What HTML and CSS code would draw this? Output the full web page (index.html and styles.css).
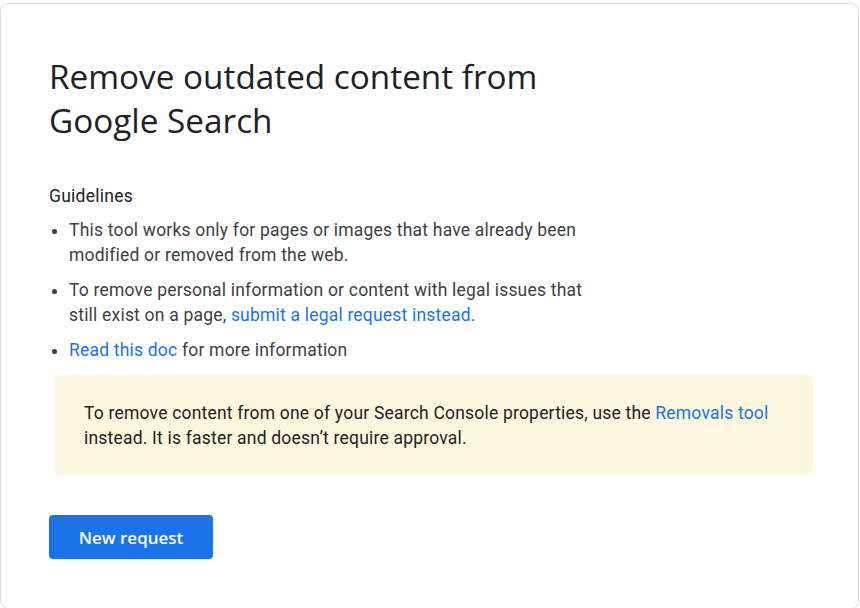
FILE: index.html
```html
<!DOCTYPE html>
<html lang="en">
<head>
<meta charset="utf-8">
<title>Remove outdated content</title>
<link rel="stylesheet" href="styles.css">
</head>
<body>
<main class="card">
  <h1 class="title">Remove outdated content from<br>Google Search</h1>
  <section class="guidelines">
    <h2 class="guidelines-heading">Guidelines</h2>
    <ul class="guidelines-list">
      <li>This tool works only for pages or images that have already been modified or removed from the web.</li>
      <li>To remove personal information or content with legal issues that still exist on a page, <a href="#" class="link">submit a legal request instead.</a></li>
      <li><a href="#" class="link">Read this doc</a> for more information</li>
    </ul>
  </section>
  <div class="notice">
    <p>To remove content from one of your Search Console properties, use the <a href="#" class="link">Removals tool</a> instead. It is faster and doesn’t require approval.</p>
  </div>
  <div class="actions">
    <button class="btn-primary" type="button">New request</button>
  </div>
</main>
</body>
</html>
```

FILE: styles.css
```css
* { box-sizing: border-box; }
html, body { margin: 0; padding: 0; background: #ffffff; }
body {
  font-family: Roboto, "Liberation Sans", sans-serif;
  color: #3c4043;
  overflow: hidden;
}
.card {
  margin-top: 3px;
  width: 859px;
  height: 606px;
  border: 1px solid #dadce0;
  border-radius: 8px;
  padding: 50px 0 0 48px;
}
.title {
  margin: 0;
  font-family: "Open Sans", sans-serif;
  font-weight: 400;
  font-size: 33.3px;
  line-height: 44px;
  color: #202124;
}
.guidelines { margin-top: 42px; width: 545px; }
.guidelines-heading {
  margin: 0;
  font-size: 17.5px;
  font-weight: 400;
  line-height: 24px;
  color: #202124;
  letter-spacing: 0.25px;
}
.guidelines-list {
  margin: 10px 0 12px 0;
  padding-left: 20px;
  font-size: 17.5px;
  line-height: 25px;
  letter-spacing: 0.2px;
}
.guidelines-list li { margin-bottom: 10px; }
.guidelines-list li:last-child { margin-bottom: 0; }
.link { color: #1a73e8; text-decoration: none; }
.notice {
  margin: 0 0 0 5px;
  width: 759px;
  background: #fef7e0;
  border-radius: 6px;
  padding: 26px 30px 24px 30px;
  font-size: 17.5px;
  line-height: 25px;
  letter-spacing: 0.2px;
  color: #202124;
}
.notice p { margin: 0; }
.actions { margin-top: 40px; }
.btn-primary {
  height: 44px;
  width: 164px;
  border: 0;
  border-radius: 4px;
  background: #1a73e8;
  color: #ffffff;
  font-family: "Open Sans", sans-serif;
  font-weight: 600;
  font-size: 17px;
  padding: 0;
}
```
